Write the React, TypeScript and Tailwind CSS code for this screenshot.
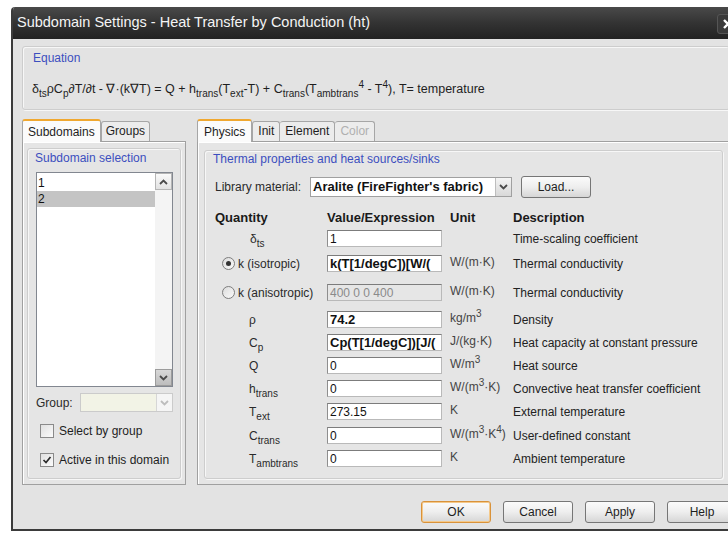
import React from "react";

const sans = "font-['Liberation_Sans',Arial,sans-serif]";

function Sub({ children }: { children: React.ReactNode }) {
  return <span className="relative top-[4px] text-[10px] leading-none">{children}</span>;
}
function Sup({ children }: { children: React.ReactNode }) {
  return <span className="relative -top-[5px] text-[10px] leading-none">{children}</span>;
}

function ChevronDown({ color = "#4a4a4a" }: { color?: string }) {
  return (
    <svg width="9" height="6" viewBox="0 0 9 6">
      <path d="M1 1 L4.5 4.5 L8 1" fill="none" stroke={color} strokeWidth="1.8" />
    </svg>
  );
}
function ChevronUp({ color = "#4a4a4a" }: { color?: string }) {
  return (
    <svg width="9" height="6" viewBox="0 0 9 6">
      <path d="M1 5 L4.5 1.5 L8 5" fill="none" stroke={color} strokeWidth="1.8" />
    </svg>
  );
}

function GroupBox({ className = "", children }: { className?: string; children: React.ReactNode }) {
  return (
    <div
      className={`border border-[#cdcdcd] rounded-[3px] shadow-[inset_1px_1px_0_#f7f7f7,1px_1px_0_#f7f7f7] ${className}`}
    >
      {children}
    </div>
  );
}

function Button({ label, focused = false }: { label: string; focused?: boolean }) {
  return (
    <div
      className={`w-[70px] h-[22px] rounded-[3px] border flex items-center justify-center text-[12px] text-[#1e1e1e] bg-gradient-to-b from-[#fbfbfb] via-[#eeeeee] to-[#d6d6d6] ${
        focused ? "border-[#d9923a] shadow-[inset_0_0_0_1px_#f4c98b]" : "border-[#767676]"
      }`}
    >
      {label}
    </div>
  );
}

function CheckBox({ checked, label }: { checked?: boolean; label: string }) {
  return (
    <div className="flex items-center gap-[5px] h-[15px]">
      <div className="w-[14px] h-[14px] border border-[#8a8a8a] bg-gradient-to-br from-[#e0e0e0] to-[#fbfbfb] flex items-center justify-center">
        {checked && (
          <svg width="10" height="10" viewBox="0 0 10 10">
            <path d="M1.5 5 L4 7.5 L8.5 2" fill="none" stroke="#2a2a2a" strokeWidth="1.7" />
          </svg>
        )}
      </div>
      <span className="text-[12px] text-[#1e1e1e]">{label}</span>
    </div>
  );
}

function Radio({ checked }: { checked?: boolean }) {
  return (
    <div className="w-[13px] h-[13px] rounded-full border border-[#7d7d7d] bg-gradient-to-br from-[#dcdcdc] to-[#fafafa] flex items-center justify-center">
      {checked && <div className="w-[5px] h-[5px] rounded-full bg-[#333]" />}
    </div>
  );
}

function Field({ value, bold = false, disabled = false }: { value: string; bold?: boolean; disabled?: boolean }) {
  return (
    <div
      className={`w-[115px] h-[17px] border border-[#b9b9b9] border-t-[#7c7c7c] border-l-[#8e8e8e] overflow-hidden whitespace-nowrap flex items-center pl-[2px] ${
        disabled ? "bg-[#e6e6e6] text-[#8a8a8a] text-[12px]" : "bg-white text-[#111]"
      } ${bold ? "font-bold text-[13px]" : "text-[12px]"}`}
    >
      {value}
    </div>
  );
}

type RowProps = {
  h: number;
  label: React.ReactNode;
  value: string;
  bold?: boolean;
  disabled?: boolean;
  unit: React.ReactNode;
  desc: string;
  radio?: boolean;
};

function Row({ h, label, value, bold, disabled, unit, desc, radio }: RowProps) {
  return (
    <div className="flex items-start" style={{ height: h }}>
      <div className={`w-[112px] h-[17px] flex items-center text-[12px] text-[#2a2a2a] ${radio ? "" : "pl-[34px]"}`}>
        {label}
      </div>
      <Field value={value} bold={bold} disabled={disabled} />
      <div className="w-[71px] pl-[8px] h-[17px] flex items-center text-[12px] text-[#444] whitespace-nowrap -mt-[2px]">
        {unit}
      </div>
      <div className="h-[17px] flex items-center text-[12px] text-[#222] whitespace-nowrap">{desc}</div>
    </div>
  );
}

export default function App() {
  return (
    <div className={`w-[728px] h-[534px] bg-white overflow-hidden pl-[11px] pt-[7px] ${sans}`}>
      <div className="w-[740px] h-[524px] flex flex-col border-l-2 border-b-2 border-[#3b3b3b] rounded-tl-[4px] overflow-hidden">
        {/* title bar */}
        <div className="h-[32px] shrink-0 bg-gradient-to-b from-[#4a4a4a] via-[#333333] to-[#222222] flex items-center pl-[4px] relative">
          <span className="text-[#f4f4f4] text-[14.5px]">
            Subdomain Settings - Heat Transfer by Conduction (ht)
          </span>
          <div className="absolute left-[704px] top-[7px] w-[22px] h-[20px] rounded-[3px] bg-[#3a3a3a] border border-[#555] flex items-center justify-center">
            <svg width="12" height="12" viewBox="0 0 12 12">
              <path d="M2 2 L10 10 M10 2 L2 10" stroke="#ffffff" strokeWidth="2.4" />
            </svg>
          </div>
        </div>

        {/* dialog body */}
        <div className="flex-1 bg-[#e3e3e3] pl-[9px] pt-[7px] flex flex-col">
          <GroupBox className="w-[708px] h-[64px] pl-[10px] pt-[3px]">
            <div className="text-[12px] text-[#3c4fbf] h-[16px] leading-[16px]">Equation</div>
            <div className="mt-[14px] text-[12.5px] text-[#1e1e1e] whitespace-nowrap -ml-[1px]">
              δ<Sub>ts</Sub>ρC<Sub>p</Sub>∂T/∂t - ∇·(k∇T) = Q + h<Sub>trans</Sub>(T<Sub>ext</Sub>-T) + C
              <Sub>trans</Sub>(T<Sub>ambtrans</Sub>
              <Sup>4</Sup> - T<Sup>4</Sup>), T= temperature
            </div>
          </GroupBox>

          <div className="flex mt-[8px] gap-[11px]">
            {/* left tab control */}
            <div className="w-[164px] flex flex-col">
              <div className="flex items-end h-[23px]">
                <div className="h-[23px] px-[5px] bg-[#fbfbfb] border border-b-0 border-[#a6a6a6] border-t-[#f0a830] border-t-2 rounded-t-[3px] text-[12px] text-[#1e1e1e] flex items-center relative z-10 -mb-[1px]">
                  Subdomains
                </div>
                <div className="h-[20px] px-[4px] bg-[#ececec] border border-b-0 border-[#a6a6a6] rounded-t-[3px] text-[12px] text-[#1e1e1e] flex items-end pb-[1px]">
                  Groups
                </div>
              </div>
              <div className="h-[344px] border border-[#a0a0a0] bg-[#e5e5e5] shadow-[inset_1px_1px_0_#fff] px-[4px] pt-[6px]">
                <GroupBox className="h-[331px] pl-[8px] pt-[1px]">
                  <div className="text-[12px] text-[#3c4fbf] h-[16px] leading-[16px] -ml-[1px]">Subdomain selection</div>
                  <div className="mt-[6px] w-[137px] h-[215px] bg-white border border-[#828790] flex">
                    <div className="flex-1 flex flex-col pt-[2px]">
                      <div className="h-[16px] leading-[16px] text-[12px] pl-[1px] text-[#111]">1</div>
                      <div className="h-[16px] leading-[16px] text-[12px] pl-[1px] bg-[#c4c4c4] text-[#111]">2</div>
                    </div>
                    <div className="w-[17px] bg-[#f4f4f4] flex flex-col justify-between">
                      <div className="h-[17px] bg-gradient-to-b from-[#fafafa] to-[#e2e2e2] border border-[#b5b5b5] flex items-center justify-center">
                        <ChevronUp />
                      </div>
                      <div className="h-[17px] bg-gradient-to-b from-[#d8d8d8] to-[#bdbdbd] border border-[#9c9c9c] flex items-center justify-center">
                        <ChevronDown />
                      </div>
                    </div>
                  </div>
                  <div className="mt-[6px] flex items-center h-[19px]">
                    <span className="text-[12px] text-[#2a2a2a] w-[44px]">Group:</span>
                    <div className="w-[93px] h-[19px] bg-[#f2f3e6] border border-[#cbcbcb] flex justify-end">
                      <div className="w-[16px] h-[17px] border-l border-[#d6d6d6] bg-[#f5f5f5] flex items-center justify-center">
                        <ChevronDown color="#bdbdbd" />
                      </div>
                    </div>
                  </div>
                  <div className="mt-[11px] pl-[4px]">
                    <CheckBox label="Select by group" />
                  </div>
                  <div className="mt-[14px] pl-[4px]">
                    <CheckBox checked label="Active in this domain" />
                  </div>
                </GroupBox>
              </div>
            </div>

            {/* right tab control */}
            <div className="w-[540px] flex flex-col">
              <div className="flex items-end h-[23px]">
                <div className="h-[23px] px-[6px] bg-[#fbfbfb] border border-b-0 border-[#a6a6a6] border-t-[#f0a830] border-t-2 rounded-t-[3px] text-[12px] text-[#1e1e1e] flex items-center relative z-10 -mb-[1px]">
                  Physics
                </div>
                <div className="h-[20px] px-[5px] bg-[#ececec] border border-b-0 border-[#a6a6a6] rounded-t-[3px] text-[12px] text-[#1e1e1e] flex items-end pb-[1px]">
                  Init
                </div>
                <div className="h-[20px] px-[5px] bg-[#ececec] border border-b-0 border-l-0 border-[#a6a6a6] rounded-t-[3px] text-[12px] text-[#1e1e1e] flex items-end pb-[1px]">
                  Element
                </div>
                <div className="h-[20px] px-[5px] bg-[#ececec] border border-b-0 border-l-0 border-[#a6a6a6] rounded-t-[3px] text-[12px] text-[#b0b0b0] flex items-end pb-[1px]">
                  Color
                </div>
              </div>
              <div className="h-[344px] border border-[#a0a0a0] bg-[#e5e5e5] shadow-[inset_1px_1px_0_#fff] pl-[6px] pt-[8px]">
                <GroupBox className="w-[519px] h-[329px] pl-[8px] pt-[0px]">
                  <div className="text-[12px] text-[#3c4fbf] h-[16px] leading-[16px]">
                    Thermal properties and heat sources/sinks
                  </div>
                  <div className="mt-[9px] flex items-center h-[21px] pl-[2px]">
                    <span className="text-[12px] text-[#2a2a2a] w-[95px]">Library material:</span>
                    <div className="w-[202px] h-[20px] bg-white border border-[#a0a0a0] flex items-center">
                      <span className="flex-1 pl-[2px] font-bold text-[13px] text-[#111] whitespace-nowrap overflow-hidden">
                        Aralite (FireFighter's fabric)
                      </span>
                      <div className="w-[16px] h-[18px] border-l border-[#bdbdbd] bg-gradient-to-b from-[#f4f4f4] to-[#d8d8d8] flex items-center justify-center">
                        <ChevronDown />
                      </div>
                    </div>
                    <div className="ml-[9px]">
                      <Button label="Load..." />
                    </div>
                  </div>

                  <div className="pl-[2px]">
                    <div className="mt-[12px] h-[17px] flex items-center font-bold text-[13px] text-[#1a1a1a]">
                      <span className="w-[112px]">Quantity</span>
                      <span className="w-[123px]">Value/Expression</span>
                      <span className="w-[63px]">Unit</span>
                      <span>Description</span>
                    </div>
                    <div className="mt-[4px]">
                      <Row
                        h={25}
                        label={
                          <span className="pl-[1px]">
                            δ<Sub>ts</Sub>
                          </span>
                        }
                        value="1"
                        unit=""
                        desc="Time-scaling coefficient"
                      />
                      <Row
                        h={29}
                        radio
                        label={
                          <span className="flex items-center gap-[3px] pl-[7px]">
                            <Radio checked />k (isotropic)
                          </span>
                        }
                        value="k(T[1/degC])[W/("
                        bold
                        unit="W/(m·K)"
                        desc="Thermal conductivity"
                      />
                      <Row
                        h={27}
                        radio
                        label={
                          <span className="flex items-center gap-[3px] pl-[7px]">
                            <Radio />k (anisotropic)
                          </span>
                        }
                        value="400 0 0 400"
                        disabled
                        unit="W/(m·K)"
                        desc="Thermal conductivity"
                      />
                      <Row h={23} label="ρ" value="74.2" bold unit={<span>kg/m<Sup>3</Sup></span>} desc="Density" />
                      <Row
                        h={23}
                        label={
                          <span>
                            C<Sub>p</Sub>
                          </span>
                        }
                        value="Cp(T[1/degC])[J/("
                        bold
                        unit="J/(kg·K)"
                        desc="Heat capacity at constant pressure"
                      />
                      <Row h={23} label="Q" value="0" unit={<span>W/m<Sup>3</Sup></span>} desc="Heat source" />
                      <Row
                        h={23}
                        label={
                          <span>
                            h<Sub>trans</Sub>
                          </span>
                        }
                        value="0"
                        unit={<span>W/(m<Sup>3</Sup>·K)</span>}
                        desc="Convective heat transfer coefficient"
                      />
                      <Row
                        h={24}
                        label={
                          <span>
                            T<Sub>ext</Sub>
                          </span>
                        }
                        value="273.15"
                        unit="K"
                        desc="External temperature"
                      />
                      <Row
                        h={23}
                        label={
                          <span>
                            C<Sub>trans</Sub>
                          </span>
                        }
                        value="0"
                        unit={<span>W/(m<Sup>3</Sup>·K<Sup>4</Sup>)</span>}
                        desc="User-defined constant"
                      />
                      <Row
                        h={17}
                        label={
                          <span>
                            T<Sub>ambtrans</Sub>
                          </span>
                        }
                        value="0"
                        unit="K"
                        desc="Ambient temperature"
                      />
                    </div>
                  </div>
                </GroupBox>
              </div>
            </div>
          </div>

          <div className="mt-[16px] flex gap-[12px] pl-[399px]">
            <Button label="OK" focused />
            <Button label="Cancel" />
            <Button label="Apply" />
            <Button label="Help" />
          </div>
        </div>
      </div>
    </div>
  );
}
